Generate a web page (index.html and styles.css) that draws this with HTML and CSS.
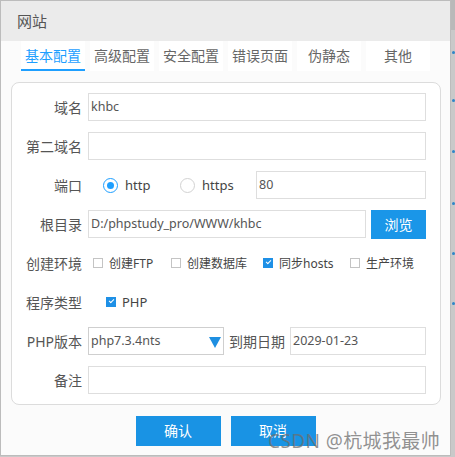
FILE: index.html
```html
<!DOCTYPE html>
<html lang="zh-CN">
<head>
<meta charset="utf-8">
<title>网站</title>
<link rel="stylesheet" href="styles.css">
</head>
<body>
<div class="backdrop">
  <span class="dot"></span><span class="dot"></span><span class="dot"></span>
  <span class="dot"></span><span class="dot"></span><span class="dot"></span>
</div>
<div class="dialog">
  <div class="title">网站</div>
  <div class="tabs">
    <div class="tab active">基本配置</div>
    <div class="tab">高级配置</div>
    <div class="tab">安全配置</div>
    <div class="tab">错误页面</div>
    <div class="tab">伪静态</div>
    <div class="tab">其他</div>
  </div>
  <div class="panel">
    <div class="row">
      <div class="lbl">域名</div>
      <div class="field grow">khbc</div>
    </div>
    <div class="row">
      <div class="lbl">第二域名</div>
      <div class="field grow"></div>
    </div>
    <div class="row">
      <div class="lbl">端口</div>
      <div class="radio r1"><span class="dot-radio on"></span>http</div>
      <div class="radio r2"><span class="dot-radio"></span>https</div>
      <div class="field grow">80</div>
    </div>
    <div class="row">
      <div class="lbl">根目录</div>
      <div class="field grow">D:/phpstudy_pro/WWW/khbc</div>
      <div class="btn-browse">浏览</div>
    </div>
    <div class="row">
      <div class="lbl">创建环境</div>
      <div class="chk c1"><span class="box"></span>创建FTP</div>
      <div class="chk c2"><span class="box"></span>创建数据库</div>
      <div class="chk c3"><span class="box on"></span>同步hosts</div>
      <div class="chk c4"><span class="box"></span>生产环境</div>
    </div>
    <div class="row">
      <div class="lbl">程序类型</div>
      <div class="chk php"><span class="box on"></span>PHP</div>
    </div>
    <div class="row">
      <div class="lbl">PHP版本</div>
      <div class="field select">php7.3.4nts<span class="caret"></span></div>
      <div class="lbl2">到期日期</div>
      <div class="field grow">2029-01-23</div>
    </div>
    <div class="row">
      <div class="lbl">备注</div>
      <div class="field grow"></div>
    </div>
  </div>
  <div class="actions">
    <div class="btn">确认</div>
    <div class="btn">取消</div>
  </div>
  <div class="watermark">CSDN @杭城我最帅</div>
</div>
</body>
</html>
```

FILE: styles.css
```css
* { box-sizing: border-box; }
html, body { margin: 0; padding: 0; }
body {
  width: 455px;
  height: 457px;
  background: #c9c9c9;
  font-family: "Noto Sans", "Noto Sans CJK SC", sans-serif;
  position: relative;
  overflow: hidden;
}
.backdrop {
  position: absolute;
  left: 451px;
  top: 0;
  width: 4px;
  height: 457px;
  background: linear-gradient(#b9b9b9 0, #b9b9b9 30px, #c9c9c9 30px);
}
.backdrop .dot {
  position: absolute;
  left: 1px;
  width: 3px;
  height: 3px;
  border-radius: 50%;
  background: #2f86c8;
}
.backdrop .dot:nth-child(1) { top: 51px; }
.backdrop .dot:nth-child(2) { top: 99px; }
.backdrop .dot:nth-child(3) { top: 150px; }
.backdrop .dot:nth-child(4) { top: 202px; }
.backdrop .dot:nth-child(5) { top: 252px; }
.backdrop .dot:nth-child(6) { top: 302px; }

.dialog {
  position: relative;
  width: 451px;
  height: 456px;
  border: 1px solid #bcbcbc;
  background: #fbfbfb;
}
.title {
  height: 40px;
  line-height: 40px;
  background: #ebebeb;
  padding-left: 16px;
  font-size: 15px;
  color: #555;
}
.tabs {
  display: flex;
  gap: 5px;
  padding-left: 20px;
  height: 30px;
}
.tab {
  width: 64px;
  height: 30px;
  line-height: 30px;
  text-align: center;
  font-size: 14px;
  color: #666;
  background: #fff;
}
.tab.active {
  color: #1e9fff;
  border-bottom: 2px solid #1e9fff;
  line-height: 29px;
}
.panel {
  margin: 11px 0 0 10px;
  width: 430px;
  border: 1px solid #dcdcdc;
  border-radius: 8px;
  background: #fff;
  padding: 10px 14px 10px 0;
  display: flex;
  flex-direction: column;
  gap: 11px;
}
.row {
  display: flex;
  align-items: center;
  height: 28px;
}
.lbl {
  width: 70px;
  margin-right: 6px;
  text-align: right;
  font-size: 14px;
  color: #555;
  flex: none;
}
.lbl2 {
  margin: 0 5px;
  font-size: 14px;
  color: #555;
  flex: none;
}
.field {
  height: 28px;
  line-height: 26px;
  border: 1px solid #dedede;
  background: #fff;
  padding-left: 2px;
  font-size: 12.5px;
  color: #555;
  white-space: nowrap;
}
.grow { flex: 1; }
.select {
  width: 136px;
  flex: none;
  position: relative;
  border-color: #cfcfcf;
}
.caret {
  position: absolute;
  right: 2px;
  top: 9px;
  width: 0;
  height: 0;
  border-left: 6px solid transparent;
  border-right: 6px solid transparent;
  border-top: 11px solid #1e8fe1;
}
.radio {
  display: flex;
  align-items: center;
  font-size: 13px;
  color: #444;
  flex: none;
}
.r1 { margin-left: 15px; width: 77px; }
.r2 { width: 76px; }
.dot-radio {
  width: 15px;
  height: 15px;
  border: 1px solid #d2d2d2;
  border-radius: 50%;
  margin-right: 7px;
  position: relative;
  background: #fff;
}
.dot-radio.on { border-color: #1e9fff; }
.dot-radio.on::after {
  content: "";
  position: absolute;
  left: 3px;
  top: 3px;
  width: 7px;
  height: 7px;
  border-radius: 50%;
  background: #1e9fff;
}
.btn-browse {
  width: 55px;
  height: 29px;
  margin-left: 5px;
  line-height: 29px;
  text-align: center;
  background: #1a96e8;
  color: #fff;
  font-size: 14px;
  flex: none;
}
.chk {
  display: flex;
  align-items: center;
  font-size: 12px;
  color: #444;
  flex: none;
}
.c1 { margin-left: 5px; width: 78px; }
.c2 { width: 92px; }
.c3 { width: 87px; }
.php { margin-left: 18px; font-size: 13px; }
.box {
  width: 10px;
  height: 10px;
  border: 1px solid #c4c4c4;
  margin-right: 6px;
  position: relative;
  background: #fff;
}
.box.on {
  background: #1e90e6;
  border-color: #1e90e6;
}
.box.on::after {
  content: "";
  position: absolute;
  left: 2px;
  top: 1px;
  width: 4px;
  height: 2px;
  border-left: 1.5px solid #fff;
  border-bottom: 1.5px solid #fff;
  transform: rotate(-45deg);
}
.actions {
  display: flex;
  justify-content: center;
  gap: 10px;
  margin-top: 11px;
}
.btn {
  width: 85px;
  height: 30px;
  line-height: 30px;
  text-align: center;
  background: #1993e4;
  color: #fff;
  font-size: 14px;
}
.watermark {
  position: absolute;
  left: 267px;
  top: 425px;
  font-size: 19px;
  color: rgba(110, 110, 110, 0.75);
  white-space: nowrap;
  letter-spacing: 0.4px;
}
```
